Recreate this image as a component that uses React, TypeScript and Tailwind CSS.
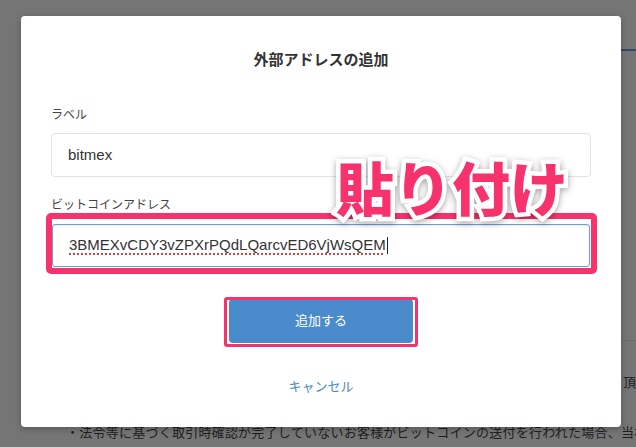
const pinkText =
  "absolute left-[315px] top-[146px] whitespace-nowrap text-[58px] leading-none font-black text-[#f8326d] [-webkit-text-stroke:9px_white] [paint-order:stroke_fill] drop-shadow-[0_2px_3px_rgba(0,0,0,0.35)]";

export default function App() {
  return (
    <div className="relative h-[447px] w-[636px] overflow-hidden bg-[#757575] font-['Liberation_Sans','Noto_Sans_CJK_JP',sans-serif]">
      {/* page behind the overlay */}
      <div className="flex flex-col">
        <div className="ml-auto mt-[49px] h-[2px] w-[15px] bg-[#2f4a66]" />
        <div className="ml-auto mt-[289px] h-px w-[15px] bg-[#6c6c6c]" />
        <p className="ml-[623px] mt-[34px] whitespace-nowrap text-[13px] leading-[16px] text-[#1f1f1f]">
          頂様
        </p>
        <p className="ml-[66px] mt-[34px] whitespace-nowrap text-[13px] leading-[16px] tracking-[0.24px] text-[#1f1f1f]">
          ・法令等に基づく取引時確認が完了していないお客様がビットコインの送付を行われた場合、当社
        </p>
      </div>

      {/* modal */}
      <div className="absolute left-[21px] top-[16px] h-[411px] w-[600px] rounded-[4px] bg-white shadow-[0_2px_6px_rgba(0,0,0,0.25)]">
        <div className="flex flex-col px-[30px] pt-[33px]">
          <h2 className="text-center text-[15px] font-semibold leading-[22px] text-[#333]">
            外部アドレスの追加
          </h2>

          <label className="mt-[34px] text-[12px] leading-[20px] text-[#444]">ラベル</label>
          <div className="mt-2 flex h-[44px] items-center rounded-[4px] border border-[#e3e3e3] pl-4 text-[15px] text-[#333]">
            bitmex
          </div>

          <label className="mt-[18px] text-[12px] leading-[20px] text-[#444]">
            ビットコインアドレス
          </label>
          <div className="relative mx-px mt-[9px]">
            <div className="flex h-[43px] items-center rounded-[3px] border border-[#6a9fd4] pl-4 text-[15px] text-[#333] shadow-[inset_0_1px_2px_rgba(0,0,0,0.08)]">
              <span className="underline decoration-[#e0403a] decoration-dotted decoration-2 underline-offset-[3px]">
                3BMEXvCDY3vZPXrPQdLQarcvED6VjWsQEM
              </span>
              <span className="ml-px inline-block h-[17px] w-px bg-[#222]" />
            </div>
            <div className="absolute -bottom-[7px] -left-[6px] -right-[7px] -top-[11px] rounded-[5px] border-[6px] border-[#f8326d]" />
          </div>

          <div className="relative mt-[32px] self-center">
            <button className="h-[44px] w-[184px] rounded-[4px] bg-[#4a8bcb] text-[13px] text-white">
              追加する
            </button>
            <div className="absolute -bottom-[4px] -left-[5px] -right-[5px] -top-[2px] rounded-[3px] border-[3px] border-[#f8326d]" />
          </div>

          <p className="mt-[34px] text-center text-[13px] leading-[20px] text-[#4d88c4]">キャンセル</p>
        </div>

        <span className={pinkText}>貼り付け</span>
      </div>
    </div>
  );
}
